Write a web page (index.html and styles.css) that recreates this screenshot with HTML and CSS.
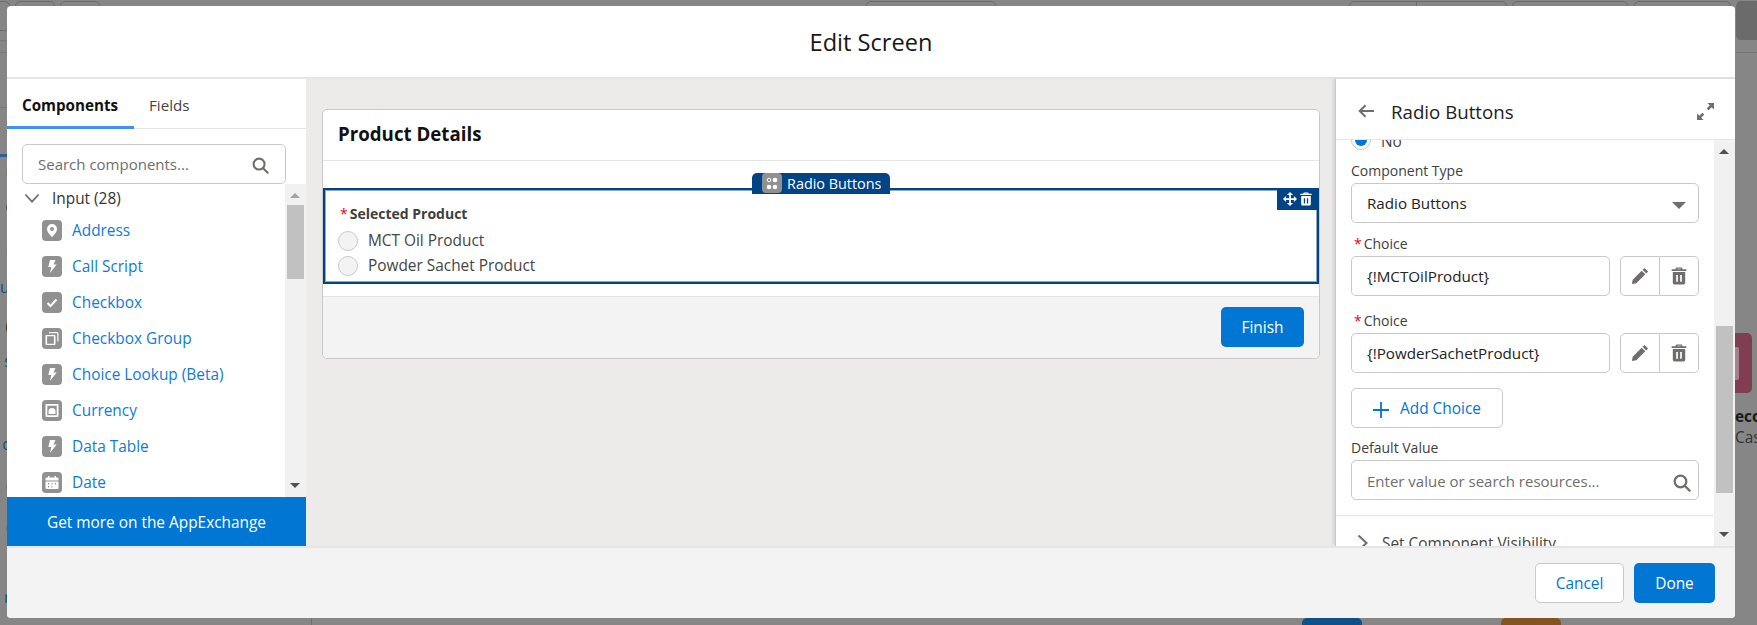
FILE: index.html
```html
<!DOCTYPE html>
<html lang="en">
  <head>
    <meta charset="UTF-8" />
    <meta name="viewport" content="width=device-width, initial-scale=1.0" />
    <title>Edit Screen</title>
    <link rel="stylesheet" href="styles.css">
  </head>
  <body>
    <!-- page behind the modal, only the edges show -->
    <div class="backdrop">
      <span class="bg-tab bg-tab-1"></span>
      <span class="bg-tab bg-tab-2"></span>
      <span class="bg-tab bg-tab-3"></span>
      <span class="bg-tab bg-tab-4"></span>
      <span class="bg-tab bg-tab-5"></span>
      <span class="bg-tab bg-tab-6"></span>
      <span class="bg-tab bg-tab-7"></span>
      <span class="bg-tab bg-tab-8"></span>
      <span class="bg-block"></span>
      <span class="bg-rule bg-rule-right"></span>
      <span class="bg-rule bg-rule-left-1"></span>
      <span class="bg-rule bg-rule-left-2"></span>
      <span class="bg-rule bg-rule-left-3"></span>
      <span class="bg-accent"></span>
      <div class="bg-side">
        <span class="frag">ct</span>
        <span class="frag link">cr</span>
        <span class="frag link">ct</span>
        <span class="frag link">ub</span>
        <span class="frag">(5</span>
        <span class="frag link">ss</span>
        <span class="frag link">e</span>
        <span class="frag link">oc</span>
        <span class="frag link">ol</span>
        <span class="frag link">ol</span>
        <span class="frag">5</span>
        <span class="frag link">re</span>
      </div>
      <span class="bg-tile bg-tile-pink"><span class="bg-tile-inner"></span></span>
      <span class="bg-text bg-text-eco">eco</span>
      <span class="bg-text bg-text-cas">Cas</span>
      <span class="bg-tile bg-tile-blue"></span>
      <span class="bg-tile bg-tile-orange"></span>
      <span class="bg-line"></span>
    </div>

    <div class="modal">
      <header class="modal-header">
        <h1>Edit Screen</h1>
      </header>

      <div class="modal-body">
        <aside class="palette">
          <div class="tabs">
            <a class="tab active">Components</a>
            <a class="tab">Fields</a>
          </div>
          <div class="palette-search">
            <div class="field search-field">
              <span class="placeholder">Search components...</span>
              <svg class="search-icon small" viewBox="0 0 18 18"><circle cx="7.5" cy="7.5" r="5.8" /><path d="M11.8 11.8 16.6 16.6" /></svg>
            </div>
          </div>
          <div class="palette-list">
            <div class="palette-items">
              <div class="group-title">
                <svg class="chevron" viewBox="0 0 18 12"><path d="M1.5 1.5 9 9.5 16.5 1.5" /></svg>
                <span>Input (28)</span>
              </div>
              <a class="item">
                <span class="item-icon"><svg viewBox="0 0 20 20"><path d="M10 3.5a5 5 0 0 0-5 5c0 3.4 3.6 6.6 5 8.2 1.4-1.6 5-4.8 5-8.2a5 5 0 0 0-5-5zm0 7a2 2 0 1 1 0-4 2 2 0 0 1 0 4z" /></svg></span>
                Address
              </a>
              <a class="item">
                <span class="item-icon"><svg viewBox="0 0 20 20"><path d="M8 3.5h5.5l-2 4.5h3.2L8 16.5l1.3-6H6.3z" /></svg></span>
                Call Script
              </a>
              <a class="item">
                <span class="item-icon"><svg viewBox="0 0 20 20"><path class="tick" d="M5.5 10.5 8.5 13.5 14.5 7" /></svg></span>
                Checkbox
              </a>
              <a class="item">
                <span class="item-icon"><svg viewBox="0 0 20 20"><path d="M7 3.5h8a1.5 1.5 0 0 1 1.5 1.5v8h-1.2V4.7H7z" /><path d="M4.5 6.5h8a1 1 0 0 1 1 1v8a1 1 0 0 1-1 1h-8a1 1 0 0 1-1-1v-8a1 1 0 0 1 1-1zm.6 1.3v7.4h6.8V7.8z" /><path class="tick thin" d="M6.3 11.5l1.6 1.6 2.8-3" /></svg></span>
                Checkbox Group
              </a>
              <a class="item">
                <span class="item-icon"><svg viewBox="0 0 20 20"><path d="M8 3.5h5.5l-2 4.5h3.2L8 16.5l1.3-6H6.3z" /></svg></span>
                Choice Lookup (Beta)
              </a>
              <a class="item">
                <span class="item-icon"><svg viewBox="0 0 20 20"><path d="M4.5 3.5h11a1 1 0 0 1 1 1v11a1 1 0 0 1-1 1h-11a1 1 0 0 1-1-1v-11a1 1 0 0 1 1-1zm.8 1.8v9.4h9.4V5.3z" /><path d="M6.5 13.5V11a3.5 3.5 0 0 1 7 0v2.5z" /></svg></span>
                Currency
              </a>
              <a class="item">
                <span class="item-icon"><svg viewBox="0 0 20 20"><path d="M8 3.5h5.5l-2 4.5h3.2L8 16.5l1.3-6H6.3z" /></svg></span>
                Data Table
              </a>
              <a class="item">
                <span class="item-icon"><svg viewBox="0 0 20 20"><path d="M6 3.5h1.5V5h5V3.5H14V5h1.5a1 1 0 0 1 1 1v2h-13V6a1 1 0 0 1 1-1H6z" /><path d="M3.5 9h13v6.5a1 1 0 0 1-1 1h-11a1 1 0 0 1-1-1zm3.5 1.5H6V12h1zm3.5 0h-1V12h1zm3.5 0h-1V12h1zm-7 3H6V15h1zm3.5 0h-1V15h1z" /></svg></span>
                Date
              </a>
            </div>
            <div class="scrollbar">
              <span class="arrow-up light"></span>
              <div class="track"><span class="thumb thumb-left"></span></div>
              <span class="arrow-down"></span>
            </div>
          </div>
          <a class="appexchange">Get more on the AppExchange</a>
        </aside>

        <main class="canvas">
          <section class="screen-card">
            <div class="screen-title">Product Details</div>
            <div class="screen-content">
              <div class="selected-comp">
                <div class="comp-tag">
                  <span class="comp-tag-icon"><svg viewBox="0 0 20 20"><circle class="ring" cx="7" cy="7" r="1.8" /><circle cx="13" cy="7" r="2.3" /><circle cx="7" cy="14" r="2.3" /><circle cx="13" cy="14" r="2.3" /></svg></span>
                  <span class="comp-tag-text">Radio Buttons</span>
                </div>
                <div class="comp-actions">
                  <svg viewBox="0 0 16 16"><path d="M8 0l3.5 3.5H9V7h3.5V4.5L16 8l-3.5 3.5V9H9v3.5h2.5L8 16l-3.5-3.5H7V9H3.5v2.5L0 8l3.5-3.5V7H7V3.5H4.5z" /></svg>
                  <svg viewBox="0 0 16 16"><path d="M6 .5h4a1 1 0 0 1 1 1V2h3.5v1.5h-13V2H5v-.5a1 1 0 0 1 1-1zm.3 1.5h3.4v-.4H6.3z" /><path fill-rule="evenodd" d="M2.5 4.5h11V14a1.5 1.5 0 0 1-1.5 1.5H4A1.5 1.5 0 0 1 2.5 14zM5.5 7v6H7V7zM9 7v6h1.5V7z" /></svg>
                </div>
                <div class="comp-label"><span class="req">*</span>Selected Product</div>
                <div class="radio-row"><span class="radio"></span>MCT Oil Product</div>
                <div class="radio-row"><span class="radio"></span>Powder Sachet Product</div>
              </div>
            </div>
            <div class="screen-footer">
              <a class="btn btn-brand finish">Finish</a>
            </div>
          </section>
        </main>

        <aside class="props">
          <div class="props-header">
            <svg class="back" viewBox="0 0 16 14"><path d="M16 7H2M7.5 1.2 1.7 7l5.8 5.8" /></svg>
            <span class="props-title">Radio Buttons</span>
            <svg class="expand" viewBox="0 0 18 18"><path d="M11 0h7v7l-2.5-2.5-3.2 3.2-2-2 3.2-3.2zM7 18H0v-7l2.5 2.5 3.2-3.2 2 2-3.2 3.2z" /></svg>
          </div>
          <div class="props-scroll">
            <div class="props-content">
              <div class="props-form">
                <div class="no-row">
                  <span class="radio radio-checked"></span>
                  <span class="no-text">No</span>
                </div>
                <label class="prop-label">Component Type</label>
                <div class="field select-field">
                  <span>Radio Buttons</span>
                  <span class="caret"></span>
                </div>
                <label class="prop-label"><span class="req">*</span>Choice</label>
                <div class="choice-row">
                  <div class="field choice-field">{!MCTOilProduct}</div>
                  <div class="btn-group">
                    <span class="icon-btn"><svg viewBox="0 0 16 16"><path d="M12 .8 15.2 4l-1.700 1.700-3.200-3.200zM9.500 3.300l3.200 3.200-8 8-3.900.7.7-3.900z" /></svg></span>
                    <span class="icon-btn"><svg viewBox="0 0 16 16"><path d="M6 .5h4a1 1 0 0 1 1 1V2h3.5v1.5h-13V2H5v-.5a1 1 0 0 1 1-1zm.3 1.5h3.4v-.4H6.3z" /><path fill-rule="evenodd" d="M2.5 4.5h11V14a1.5 1.5 0 0 1-1.5 1.5H4A1.5 1.5 0 0 1 2.5 14zM5.500 7v6H7V7zM9 7v6h1.500V7z" /></svg></span>
                  </div>
                </div>
                <label class="prop-label second-choice"><span class="req">*</span>Choice</label>
                <div class="choice-row">
                  <div class="field choice-field">{!PowderSachetProduct}</div>
                  <div class="btn-group">
                    <span class="icon-btn"><svg viewBox="0 0 16 16"><path d="M12 .8 15.2 4l-1.700 1.700-3.200-3.200zM9.500 3.300l3.200 3.200-8 8-3.900.7.7-3.900z" /></svg></span>
                    <span class="icon-btn"><svg viewBox="0 0 16 16"><path d="M6 .5h4a1 1 0 0 1 1 1V2h3.5v1.5h-13V2H5v-.5a1 1 0 0 1 1-1zm.3 1.5h3.4v-.4H6.3z" /><path fill-rule="evenodd" d="M2.5 4.5h11V14a1.5 1.5 0 0 1-1.5 1.5H4A1.5 1.5 0 0 1 2.5 14zM5.500 7v6H7V7zM9 7v6h1.500V7z" /></svg></span>
                  </div>
                </div>
                <a class="btn add-choice">
                  <svg viewBox="0 0 16 16"><path d="M8 0v16M0 8h16" /></svg>
                  Add Choice
                </a>
                <label class="prop-label default-label">Default Value</label>
                <div class="field default-field">
                  <span class="placeholder">Enter value or search resources...</span>
                  <svg class="search-icon" viewBox="0 0 18 18"><circle cx="7.5" cy="7.5" r="5.8" /><path d="M11.8 11.8 16.6 16.6" /></svg>
                </div>
              </div>
              <div class="visibility-row">
                <svg class="chevron-right" viewBox="0 0 11 18"><path d="M1.5 1.5 9.5 9 1.5 16.5" /></svg>
                <span>Set Component Visibility</span>
              </div>
            </div>
            <div class="scrollbar">
              <span class="arrow-up"></span>
              <div class="track"><span class="thumb thumb-right"></span></div>
              <span class="arrow-down"></span>
            </div>
          </div>
        </aside>
      </div>

      <footer class="modal-footer">
        <a class="btn cancel">Cancel</a>
        <a class="btn btn-brand done">Done</a>
      </footer>
    </div>
  </body>
</html>
```

FILE: styles.css
```css
* {
  box-sizing: border-box;
}

html,
body {
  height: 100%;
  margin: 0;
  overflow: hidden;
}

body {
  font-family: "Open Sans", "Noto Sans", Arial, sans-serif;
  font-size: 15.4px;
  color: #181818;
  background: #868686;
}

svg {
  display: block;
}

/* page behind the modal */
.backdrop {
  position: absolute;
  inset: 0;
  overflow: hidden;
}

.bg-tab {
  position: absolute;
  top: 1px;
  height: 30px;
  border: 1px solid #6b6b6b;
  border-radius: 5px;
}

.bg-tab-1 { left: -20px; width: 30px; }
.bg-tab-2 { left: 15px; width: 40px; }
.bg-tab-3 { left: 60px; width: 40px; }
.bg-tab-4 { left: 866px; width: 130px; }
.bg-tab-5 { left: 1349px; width: 68px; border-radius: 5px 0 0 5px; }
.bg-tab-6 { left: 1416px; width: 91px; border-radius: 0 5px 5px 0; }
.bg-tab-7 { left: 1512px; width: 116px; }
.bg-tab-8 { left: 1634px; width: 97px; }

.bg-block {
  position: absolute;
  left: 1736px;
  top: 1px;
  width: 30px;
  height: 39px;
  background: #6b6b6b;
  border-radius: 5px;
}

.bg-rule {
  position: absolute;
  height: 1px;
  background: #777;
}

.bg-rule-right { left: 1736px; top: 52px; width: 21px; }
.bg-rule-left-1 { left: 0; top: 40px; width: 7px; }
.bg-rule-left-2 { left: 0; top: 52px; width: 7px; }
.bg-rule-left-3 { left: 0; top: 107px; width: 7px; }

.bg-accent {
  position: absolute;
  left: 0;
  top: 154px;
  width: 7px;
  height: 3px;
  background: #2d5f9d;
}

/* ends of the link texts, the rest runs under the modal */
.bg-side {
  position: absolute;
  left: 0;
  top: 162px;
  width: 10px;
  display: grid;
  grid-template-rows: 35px 41px 40px 39px 35px 40px 43px 42px 41px 27px 43px 20px;
}

.frag {
  display: flex;
  justify-content: flex-end;
  height: 20px;
  line-height: 20px;
  color: #2a2a2a;
  white-space: nowrap;
}

.frag.link {
  color: #0d4f8a;
}

.bg-tile {
  position: absolute;
  display: block;
}

.bg-tile-pink {
  left: 1735px;
  top: 333px;
  width: 17px;
  height: 60px;
  background: #7f3f50;
  border-radius: 0 5px 5px 0;
}

.bg-tile-inner {
  display: block;
  width: 4px;
  height: 33px;
  margin-top: 14px;
  background: #a97f8b;
  border-radius: 0 2px 2px 0;
}

.bg-tile-blue {
  left: 1302px;
  top: 618px;
  width: 60px;
  height: 10px;
  background: #0f5089;
  border-radius: 5px 5px 0 0;
}

.bg-tile-orange {
  left: 1501px;
  top: 618px;
  width: 60px;
  height: 10px;
  background: #85531f;
  border-radius: 5px 5px 0 0;
}

.bg-text {
  position: absolute;
  left: 1735px;
  color: #1a1a1a;
  line-height: 20px;
}

.bg-text-eco { top: 407px; font-weight: 700; }
.bg-text-cas { top: 428px; color: #333; }

.bg-line {
  position: absolute;
  left: 311px;
  top: 618px;
  width: 1px;
  height: 7px;
  background: #6f6f6f;
}

/* modal */
.modal {
  position: absolute;
  left: 7px;
  top: 6px;
  width: 1728px;
  height: 612px;
  display: flex;
  flex-direction: column;
  background: #fff;
  border-radius: 4px;
  overflow: hidden;
}

.modal-header {
  flex: 0 0 73px;
  display: flex;
  align-items: center;
  justify-content: center;
  border-bottom: 2px solid #e5e5e5;
}

.modal-header h1 {
  margin: 0;
  font-size: 23.6px;
  font-weight: 400;
}

.modal-body {
  flex: 1;
  min-height: 0;
  display: flex;
  background: #ecebea;
}

.modal-footer {
  flex: 0 0 72px;
  display: flex;
  justify-content: flex-end;
  align-items: center;
  gap: 10px;
  padding: 0 20px 0 0;
  background: #f3f3f3;
  border-top: 2px solid #e5e5e5;
}

/* left palette */
.palette {
  flex: 0 0 299px;
  display: flex;
  flex-direction: column;
  background: #fff;
}

.tabs {
  flex: 0 0 50px;
  display: flex;
  align-items: stretch;
  border-bottom: 1px solid #e5e5e5;
}

.tab {
  display: flex;
  align-items: center;
  padding: 2px 0 0 15px;
  color: #444;
  font-size: 15.2px;
}

.tab.active {
  width: 127px;
  margin-bottom: -1px;
  padding-top: 5px;
  font-weight: 700;
  color: #111;
  border-bottom: 3px solid #3d91f0;
}

.palette-search {
  flex: 0 0 55px;
  padding: 15px 20px 0 15px;
}

.field {
  display: flex;
  align-items: center;
  justify-content: space-between;
  height: 40px;
  padding: 0 16px 0 15px;
  font-size: 15.2px;
  background: #fff;
  border: 1px solid #c9c9c9;
  border-radius: 5px;
}

.placeholder {
  color: #706e6b;
  font-size: 15px;
}

.default-field .placeholder {
  padding-top: 1px;
}

.search-icon {
  width: 18px;
  height: 18px;
  margin-top: 6px;
  fill: none;
  stroke: #706e6b;
  stroke-width: 2.2;
  stroke-linecap: round;
}

.search-icon.small {
  width: 17px;
  height: 17px;
  margin-top: 3px;
}

.palette-list {
  flex: 1;
  min-height: 0;
  display: flex;
  overflow: hidden;
}

.palette-items {
  flex: 1;
  min-width: 0;
  overflow: hidden;
}

.group-title {
  display: flex;
  align-items: center;
  height: 28.5px;
  padding-left: 17px;
  color: #333;
}

.chevron {
  width: 16px;
  height: 11px;
  margin-right: 12px;
  fill: none;
  stroke: #706e6b;
  stroke-width: 2;
}

.item {
  display: flex;
  align-items: center;
  height: 36px;
  padding-left: 35px;
  color: #0f7bd9;
}

.item-icon {
  flex: 0 0 20px;
  width: 20px;
  height: 21px;
  margin-right: 10px;
  background: #919191;
  border-radius: 4px;
}

.item-icon svg {
  width: 20px;
  height: 21px;
  fill: #fff;
}

.tick {
  fill: none;
  stroke: #fff;
  stroke-width: 2;
}

.tick.thin {
  stroke: #919191;
  stroke-width: 1;
}

.scrollbar {
  flex: 0 0 21px;
  display: flex;
  flex-direction: column;
  align-items: center;
  background: #f1f1f1;
}

.arrow-up,
.arrow-down {
  flex: 0 0 17px;
  position: relative;
  width: 100%;
}

.arrow-up::after,
.arrow-down::after {
  content: "";
  position: absolute;
  left: 5px;
  border-left: 5px solid transparent;
  border-right: 5px solid transparent;
}

.arrow-up::after {
  top: 9px;
  border-bottom: 5px solid #505050;
}

.arrow-up.light::after {
  border-bottom-color: #a3a3a3;
}

.arrow-down::after {
  top: 3px;
  border-top: 5px solid #505050;
}

.track {
  flex: 1;
  width: 100%;
}

.thumb {
  display: block;
  margin: 0 2px;
  background: #c1c1c1;
}

.thumb-left {
  height: 74px;
  margin-top: 4px;
}

.thumb-right {
  height: 167px;
  margin-top: 169px;
}

.appexchange {
  flex: 0 0 49px;
  display: flex;
  align-items: center;
  justify-content: center;
  padding-top: 2px;
  background: #0176d3;
  color: #fff;
}

/* center canvas */
.canvas {
  flex: 1;
  min-width: 0;
  padding: 30px 15px 0 16px;
}

.screen-card {
  background: #fff;
  border: 1px solid #c9c9c9;
  border-radius: 5px;
}

.screen-title {
  height: 51px;
  display: flex;
  align-items: center;
  padding: 0 0 3px 15px;
  font-size: 18.7px;
  font-weight: 700;
  color: #111;
  border-bottom: 1px solid #e5e5e5;
}

.screen-content {
  padding: 27px 0 12px;
}

.selected-comp {
  position: relative;
  height: 96px;
  padding: 15px 0 0 13px;
  border: 2px solid #014486;
  box-shadow: inset 0 0 0 1px rgba(1, 68, 134, 0.45);
}

.comp-tag {
  position: absolute;
  left: 427px;
  top: -17px;
  width: 138px;
  height: 21px;
  display: flex;
  align-items: flex-start;
  padding-left: 10px;
  overflow: hidden;
  color: #fff;
  background: #014486;
  border-radius: 5px 5px 0 0;
}

.comp-tag-icon {
  flex: 0 0 20px;
  height: 20px;
  margin-right: 5px;
  background: #919191;
  border-radius: 4px;
}

.comp-tag-icon svg {
  width: 20px;
  height: 20px;
  fill: #fff;
}

.comp-tag-icon .ring {
  fill: none;
  stroke: #fff;
  stroke-width: 1;
}

/* the label is cut off by the selection frame in the builder */
.comp-tag-text {
  height: 16px;
  margin-top: 1px;
  overflow: hidden;
  font-size: 14.4px;
  line-height: 20px;
  white-space: nowrap;
}

.comp-actions {
  position: absolute;
  right: -2px;
  top: -2px;
  width: 42px;
  height: 22px;
  display: flex;
  align-items: center;
  justify-content: center;
  gap: 2px;
  background: #014486;
}

.comp-actions svg {
  width: 14px;
  height: 14px;
  fill: #fff;
}

.comp-label {
  margin: 0 0 5px 2px;
  font-size: 14px;
  font-weight: 700;
  line-height: 18px;
  color: #3e3e3c;
}

.req {
  margin-right: 2px;
  color: #ea001e;
  font-weight: 400;
}

.radio-row {
  display: flex;
  align-items: center;
  height: 25px;
  color: #444;
}

.radio {
  flex: 0 0 20px;
  width: 20px;
  height: 20px;
  margin-right: 10px;
  background: #f3f3f3;
  border: 1px solid #c9c9c9;
  border-radius: 50%;
}

.screen-footer {
  display: flex;
  justify-content: flex-end;
  height: 62px;
  padding: 10px 15px 0 0;
  background: #f3f3f3;
  border-top: 1px solid #e5e5e5;
  border-radius: 0 0 5px 5px;
}

.btn {
  display: flex;
  align-items: center;
  justify-content: center;
  height: 40px;
  border-radius: 5px;
}

.btn-brand {
  background: #0176d3;
  color: #fff;
}

.finish {
  width: 83px;
}

.cancel {
  width: 89px;
  background: #fff;
  color: #0176d3;
  border: 1px solid #c9c9c9;
}

.done {
  width: 81px;
}

/* right property panel */
.props {
  flex: 0 0 400px;
  display: flex;
  flex-direction: column;
  background: #fff;
  border-left: 1px solid #c9c9c9;
  box-shadow: -2px 0 3px rgba(0, 0, 0, 0.1);
}

.props-header {
  flex: 0 0 61px;
  display: flex;
  align-items: center;
  padding: 4px 21px 0 22px;
  border-bottom: 1px solid #e5e5e5;
}

.back {
  width: 16px;
  height: 14px;
  margin-right: 17px;
  fill: none;
  stroke: #706e6b;
  stroke-width: 2;
}

.props-title {
  flex: 1;
  font-size: 18.7px;
  color: #222;
}

.expand {
  width: 17px;
  height: 17px;
  fill: #706e6b;
}

.props-scroll {
  flex: 1;
  min-height: 0;
  display: flex;
  overflow: hidden;
}

.props-content {
  flex: 1;
  min-width: 0;
  overflow: hidden;
}

/* starts above the fold, the panel is scrolled down a bit */
.props-form {
  height: 387px;
  padding: 0 15px;
  border-bottom: 1px solid #e5e5e5;
}

.no-row {
  display: flex;
  align-items: center;
  height: 21px;
  margin-top: -11px;
  color: #444;
}

.no-text {
  padding-top: 3px;
}

.radio-checked {
  position: relative;
  background: #fff;
}

.radio-checked::after {
  content: "";
  position: absolute;
  inset: 3px;
  background: #0176d3;
  border-radius: 50%;
}

.prop-label {
  display: block;
  height: 20px;
  margin: 11px 0 2px;
  font-size: 14px;
  line-height: 20px;
  color: #3e3e3c;
}

.prop-label.second-choice {
  margin-top: 15px;
}

.prop-label .req {
  margin-left: 3px;
}

.select-field {
  padding-right: 12px;
  color: #222;
}

.caret {
  margin-top: 4px;
  border-left: 7px solid transparent;
  border-right: 7px solid transparent;
  border-top: 7px solid #706e6b;
}

.choice-row {
  display: flex;
  justify-content: space-between;
}

.choice-field {
  width: 259px;
  color: #222;
}

.btn-group {
  display: flex;
  width: 79px;
  height: 40px;
}

.icon-btn {
  flex: 1;
  display: flex;
  align-items: center;
  justify-content: center;
  background: #fff;
  border: 1px solid #c9c9c9;
  border-radius: 5px 0 0 5px;
}

.icon-btn + .icon-btn {
  border-left: 0;
  border-radius: 0 5px 5px 0;
}

.icon-btn svg {
  width: 18px;
  height: 18px;
  fill: #706e6b;
}

.add-choice {
  width: 152px;
  margin-top: 15px;
  background: #fff;
  color: #0176d3;
  border: 1px solid #c9c9c9;
}

.add-choice svg {
  width: 16px;
  height: 16px;
  margin: 3px 11px 0 0;
  fill: none;
  stroke: #0176d3;
  stroke-width: 1.8;
}

.default-label {
  margin-top: 10px;
}

.default-field {
  padding-right: 7px;
}

.visibility-row {
  display: flex;
  align-items: center;
  height: 54px;
  padding-left: 21px;
  color: #444;
}

.chevron-right {
  width: 11px;
  height: 18px;
  margin-right: 14px;
  fill: none;
  stroke: #706e6b;
  stroke-width: 2;
}
```
